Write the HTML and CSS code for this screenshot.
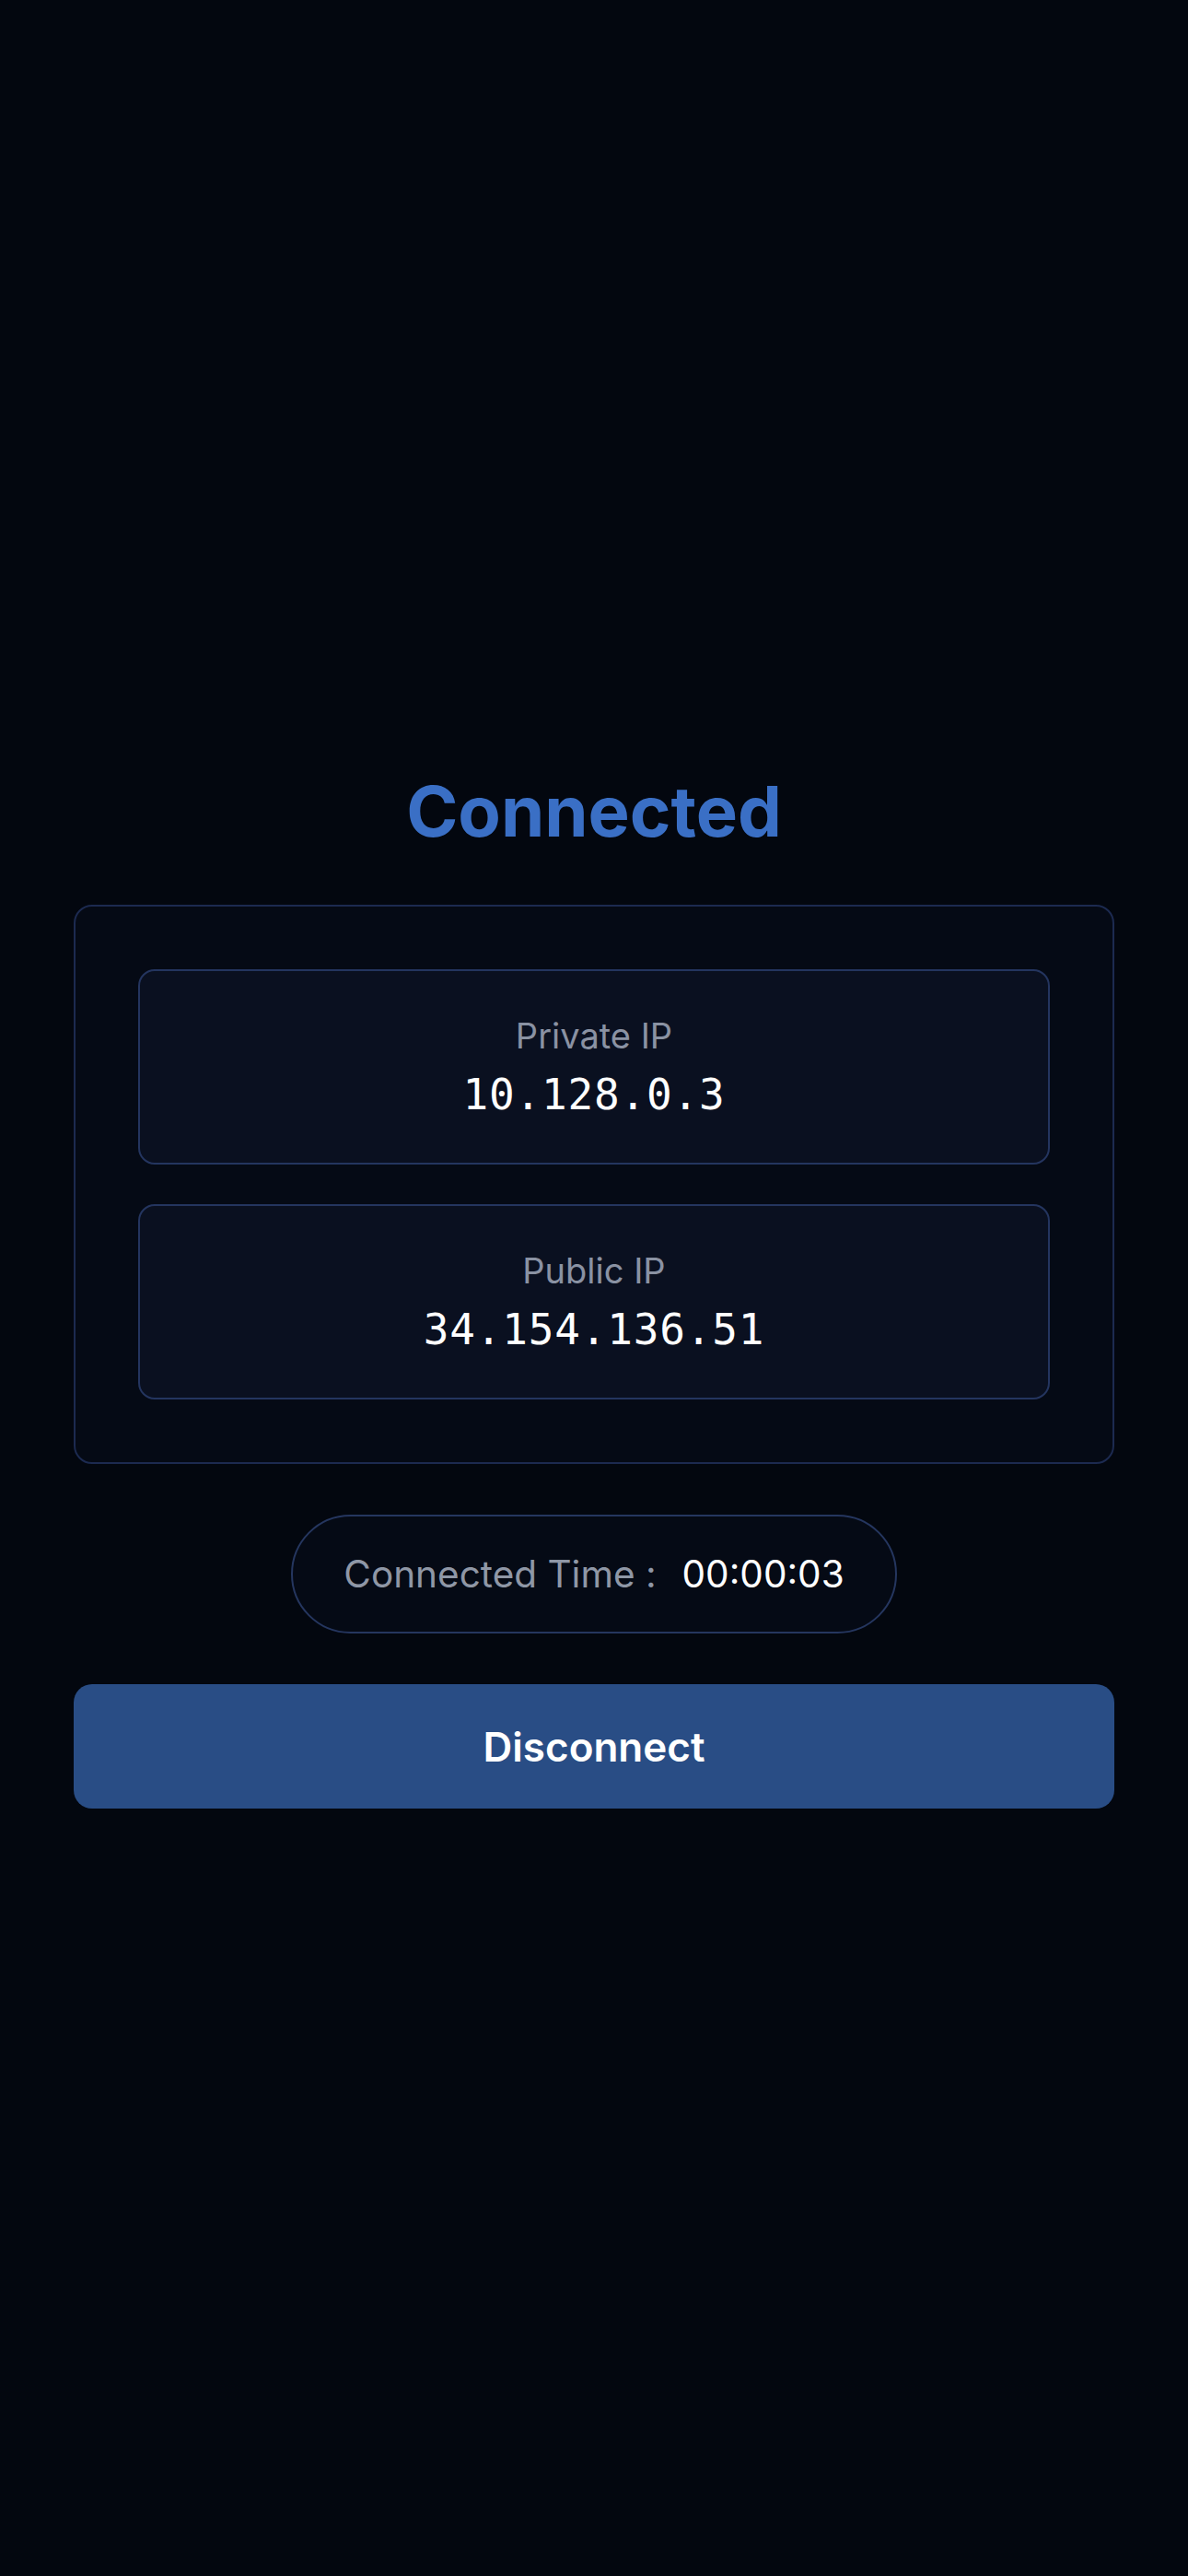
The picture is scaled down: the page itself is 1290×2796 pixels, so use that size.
FILE: index.html
```html
<!DOCTYPE html>
<html lang="en">
<head>
  <meta charset="UTF-8" />
  <meta name="viewport" content="width=device-width, initial-scale=1" />
  <title>VPN Status</title>
  <link rel="stylesheet" href="styles.css">
</head>
<body>
  <main class="status-screen">
    <h1 class="status-title">Connected</h1>

    <section class="ip-panel">
      <div class="ip-card">
        <div class="ip-label">Private IP</div>
        <div class="ip-value">10.128.0.3</div>
      </div>
      <div class="ip-card">
        <div class="ip-label">Public IP</div>
        <div class="ip-value">34.154.136.51</div>
      </div>
    </section>

    <div class="timer-pill">
      <span class="timer-label">Connected Time :</span>
      <span class="timer-value">00:00:03</span>
    </div>

    <button type="button" class="disconnect-btn">Disconnect</button>
  </main>
</body>
</html>
```

FILE: styles.css
```css
body {
  margin: 0;
  background: #03070f;
  font-family: 'Inter', 'Roboto', sans-serif;
  color: #fff;
}

.status-screen {
  min-height: 100vh;
  box-sizing: border-box;
  padding: 0 80px;
  display: flex;
  flex-direction: column;
  align-items: center;
  justify-content: center;
  gap: 55px;
}

.status-title {
  margin: 0;
  font-size: 76px;
  line-height: 94px;
  font-weight: 700;
  color: #3a6fc5;
}

.ip-panel {
  width: 100%;
  box-sizing: border-box;
  padding: 68px;
  background: #050a15;
  border: 2px solid #1c2a50;
  border-radius: 20px;
  display: flex;
  flex-direction: column;
  gap: 43px;
}

.ip-card {
  height: 212px;
  box-sizing: border-box;
  background: #0a1020;
  border: 2px solid #24355f;
  border-radius: 18px;
  display: flex;
  flex-direction: column;
  align-items: center;
  justify-content: center;
  gap: 14px;
}

.ip-label {
  font-size: 38px;
  line-height: 46px;
  color: #8a92a3;
}

.ip-value {
  font-family: 'DejaVu Sans Mono', 'Liberation Mono', monospace;
  font-size: 46px;
  line-height: 54px;
  letter-spacing: 0.8px;
  color: #fff;
}

.timer-pill {
  height: 129px;
  box-sizing: border-box;
  padding: 0 55px;
  border: 2px solid #25365f;
  border-radius: 65px;
  background: #050a15;
  display: flex;
  align-items: center;
  gap: 28px;
  font-size: 40.5px;
}

.timer-label {
  color: #8f97a6;
}

.timer-value {
  color: #fff;
}

.disconnect-btn {
  width: 100%;
  height: 135px;
  border: none;
  border-radius: 20px;
  background: #294d85;
  color: #fff;
  font-family: 'Inter', 'Roboto', sans-serif;
  font-size: 44px;
  font-weight: 600;
  cursor: pointer;
}
```
